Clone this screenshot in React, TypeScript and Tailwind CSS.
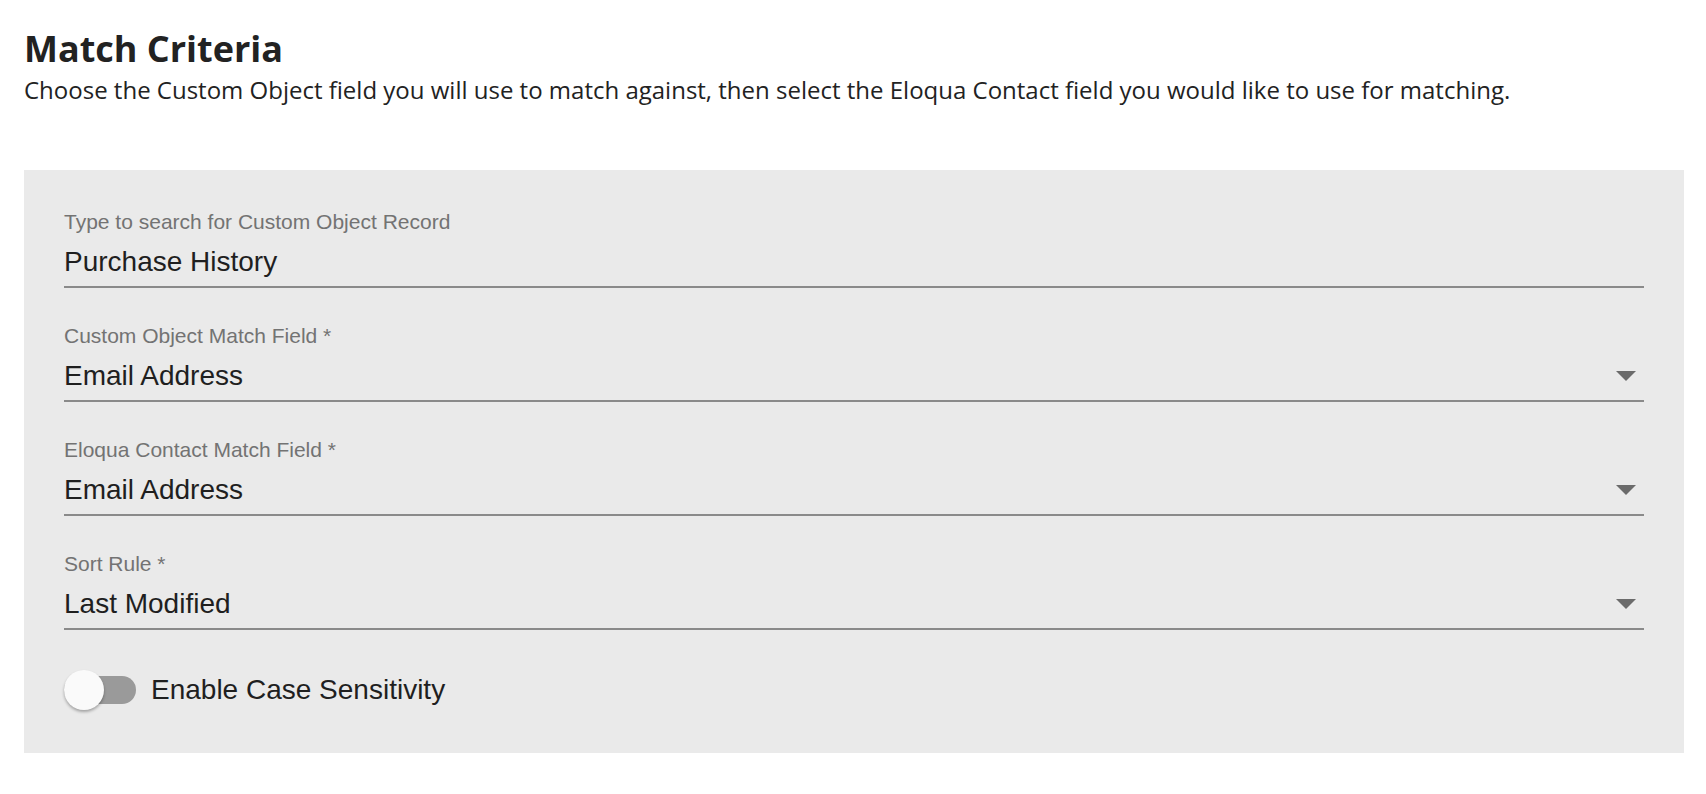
import React from "react";

const Chevron = () => (
  <svg width="20" height="10" viewBox="0 0 20 10" className="shrink-0 mr-[8px]">
    <path d="M0 0 L20 0 L10 10 Z" fill="#6b6b6b" />
  </svg>
);

function Field({ label, value, select }: { label: string; value: string; select?: boolean }) {
  return (
    <div className="flex flex-col border-b-2 border-[#8a8a8a] pb-[7px]">
      <div className="text-[21px] leading-[24px] text-[#737373]">{label}</div>
      <div className="mt-[11px] flex items-center justify-between">
        <div className="text-[28px] leading-[34px] text-[#1f1f1f]">{value}</div>
        {select && <Chevron />}
      </div>
    </div>
  );
}

export default function App() {
  return (
    <div className="w-[1706px] min-h-[794px] bg-white pl-[24px] pt-[27px]">
      <h1
        className="text-[36px] leading-[44px] font-bold text-[#222222]"
        style={{ fontFamily: '"Open Sans", sans-serif' }}
      >
        Match Criteria
      </h1>
      <p
        className="mt-[3px] text-[24px] leading-[32px] text-[#222222]"
        style={{ fontFamily: '"Open Sans", sans-serif' }}
      >
        Choose the Custom Object field you will use to match against, then select the Eloqua Contact field you would like to use for matching.
      </p>
      <div
        className="mt-[64px] w-[1660px] bg-[#eaeaea] px-[40px] pt-[40px] pb-[43px] flex flex-col gap-[36px]"
        style={{ fontFamily: '"Liberation Sans", Arial, sans-serif' }}
      >
        <Field label="Type to search for Custom Object Record" value="Purchase History" />
        <Field label="Custom Object Match Field *" value="Email Address" select />
        <Field label="Eloqua Contact Match Field *" value="Email Address" select />
        <Field label="Sort Rule *" value="Last Modified" select />
        <div className="mt-[4px] flex items-center h-[40px]">
          <div className="relative w-[72px] h-[40px] flex items-center">
            <div className="w-[72px] h-[28px] rounded-full bg-[#9a9a9a]" />
            <div className="absolute left-0 top-0 w-[40px] h-[40px] rounded-full bg-[#fafafa] shadow-[0_2px_3px_rgba(0,0,0,0.3)]" />
          </div>
          <span className="ml-[15px] text-[28px] leading-[34px] text-[#1f1f1f]">Enable Case Sensitivity</span>
        </div>
      </div>
    </div>
  );
}
